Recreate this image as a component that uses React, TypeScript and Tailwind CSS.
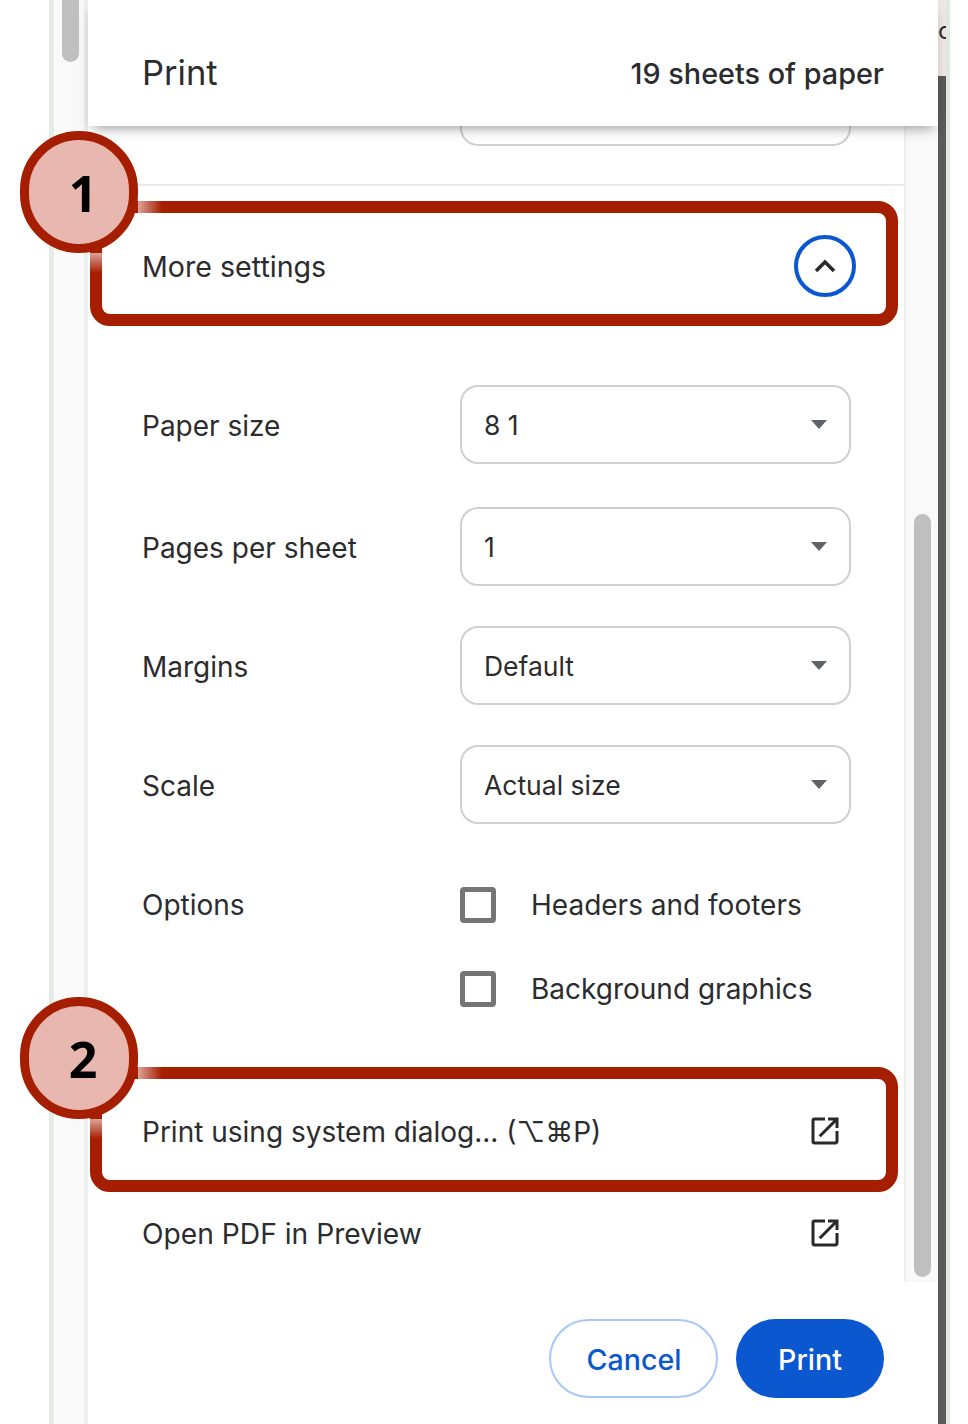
function ExternalIcon() {
  return (
    <svg viewBox="0 0 24 24" className="w-9 h-9 fill-[#28292b]">
      <path d="M19 19H5V5h7V3H5a2 2 0 0 0-2 2v14a2 2 0 0 0 2 2h14c1.1 0 2-.9 2-2v-7h-2v7zM14 3v2h3.59l-9.83 9.83 1.41 1.41L19 6.41V10h2V3h-7z" />
    </svg>
  );
}

function SelectRow({ label, value, className }: { label: string; value: string; className: string }) {
  return (
    <div className={`flex items-center pl-[54px] ${className}`}>
      <span className="w-[318px] pt-[2px]">{label}</span>
      <div className="flex h-[79px] w-[391px] items-center justify-between rounded-[18px] border-2 border-[#cfd0d2] pl-[22px] pr-[22px]">
        <span className="pt-[2px] text-[26.5px]">{value}</span>
        <svg viewBox="0 0 16 9" className="h-[9px] w-4 fill-[#5f6368]">
          <path d="M0 0h16L8 9z" />
        </svg>
      </div>
    </div>
  );
}

function CheckRow({ label, className, left }: { label: string; className: string; left?: string }) {
  return (
    <div className={`flex h-9 items-center pl-[54px] ${className}`}>
      <span className="w-[318px]">{left}</span>
      <div className="h-9 w-9 rounded-[4px] border-[5px] border-[#757575]" />
      <span className="ml-[35px]">{label}</span>
    </div>
  );
}

function Callout({ n, className }: { n: number; className: string }) {
  return (
    <div className={`absolute left-[90px] h-[125px] w-[808px] rounded-[20px] border-[12px] border-[#a61e00] ${className}`}>
      {/* washed out ends of the frame next to the badge */}
      <div className="absolute left-[36px] top-[-12px] h-[12px] w-[24px] bg-gradient-to-r from-white/60 to-white/0" />
      <div className="absolute left-[-12px] top-[40px] h-[20px] w-[12px] bg-gradient-to-b from-white/60 to-white/0" />
      <div className="absolute left-[-82px] top-[-82px] flex h-[122px] w-[118px] items-center justify-center rounded-full border-[9px] border-[#a61e00] bg-[#e8b8b0] pl-[8px] pt-[3px] font-['Open_Sans',sans-serif] text-[50px] font-bold text-black">
        {n}
      </div>
    </div>
  );
}

export default function App() {
  return (
    <div className="relative flex h-[1424px] w-[968px] overflow-hidden bg-white font-['Inter',sans-serif] text-[28px] text-[#2b2c2e]">
      <div className="w-[49px]" />
      <div className="w-[5px] bg-[#e4ece8]" />
      <div className="w-[30px] bg-[#f9f9fa] pl-2">
        <div className="h-[62px] w-[17px] rounded-b-[9px] bg-[#bfbfbf]" />
      </div>
      <div className="w-1 bg-[#eceef0]" />

      <div className="flex w-[850px] flex-col">
        <div className="relative z-10 flex h-[126px] items-center justify-between bg-white pl-[54px] pr-[54px] pt-[20px] shadow-[0_7px_12px_-5px_rgba(0,0,0,0.4)]">
          <span className="text-[34.5px]">Print</span>
          <span className="pt-[2px] text-[28.8px] font-medium">19 sheets of paper</span>
        </div>

        <div className="flex h-[1156px]">
          <div className="w-[818px] border-r-2 border-[#eeeeef]">
            <div className="h-[60px] border-b-2 border-[#e8eaed]">
              <div className="ml-[372px] h-[20px] w-[391px] rounded-b-[18px] border-2 border-t-0 border-[#cfd0d2]" />
            </div>
            <div className="flex h-[161px] items-center justify-between pl-[54px] pr-[48px]">
              <span className="pt-[2px] text-[28.6px]">More settings</span>
              <div className="mb-[2px] flex h-[62px] w-[62px] items-center justify-center rounded-full border-4 border-[#0b57d0]">
                <svg viewBox="0 0 24 14" className="h-[14px] w-6 fill-none stroke-[#28292b] stroke-[3.5]">
                  <path d="M3 12 12 3l9 9" />
                </svg>
              </div>
            </div>
            <SelectRow label="Paper size" value="8 1" className="mt-[38px]" />
            <SelectRow label="Pages per sheet" value="1" className="mt-[43px]" />
            <SelectRow label="Margins" value="Default" className="mt-[40px]" />
            <SelectRow label="Scale" value="Actual size" className="mt-[40px]" />
            <CheckRow left="Options" label="Headers and footers" className="mt-[63px]" />
            <CheckRow label="Background graphics" className="mt-[48px]" />
            <div className="mt-[98px] flex h-[52px] items-center justify-between pl-[54px] pr-[61px]">
              <span className="pt-[2px]">Print using system dialog... (⌥⌘P)</span>
              <ExternalIcon />
            </div>
            <div className="mt-[50px] flex h-[52px] items-center justify-between pl-[54px] pr-[61px]">
              <span className="pt-[2px] text-[28.2px]">Open PDF in Preview</span>
              <ExternalIcon />
            </div>
          </div>
          <div className="flex-1 bg-[#f9f9fa] pl-[8px] pt-[388px]">
            <div className="h-[763px] w-[17px] rounded-[9px] bg-[#bfbfbf]" />
          </div>
        </div>

        <div className="flex flex-1 items-start justify-end gap-[18px] pr-[54px] pt-[37px] text-[28.6px] font-medium">
          <button className="h-[79px] w-[169px] rounded-full border-2 border-[#a8c7fa] pl-[1px] pt-[3px] text-[#0b57d0]">Cancel</button>
          <button className="h-[79px] w-[148px] rounded-full bg-[#0b57d0] pt-[3px] text-white">Print</button>
        </div>
      </div>

      <div className="flex w-2 flex-col">
        <div className="h-[76px] overflow-hidden bg-[#efe7e5] pt-[15px] text-[24px] leading-8">c</div>
        <div className="flex-1 bg-[#5a5a5a]" />
      </div>
      <div className="w-1 bg-[#dfe9e2]" />

      <Callout n={1} className="top-[201px]" />
      <Callout n={2} className="top-[1067px]" />
    </div>
  );
}
